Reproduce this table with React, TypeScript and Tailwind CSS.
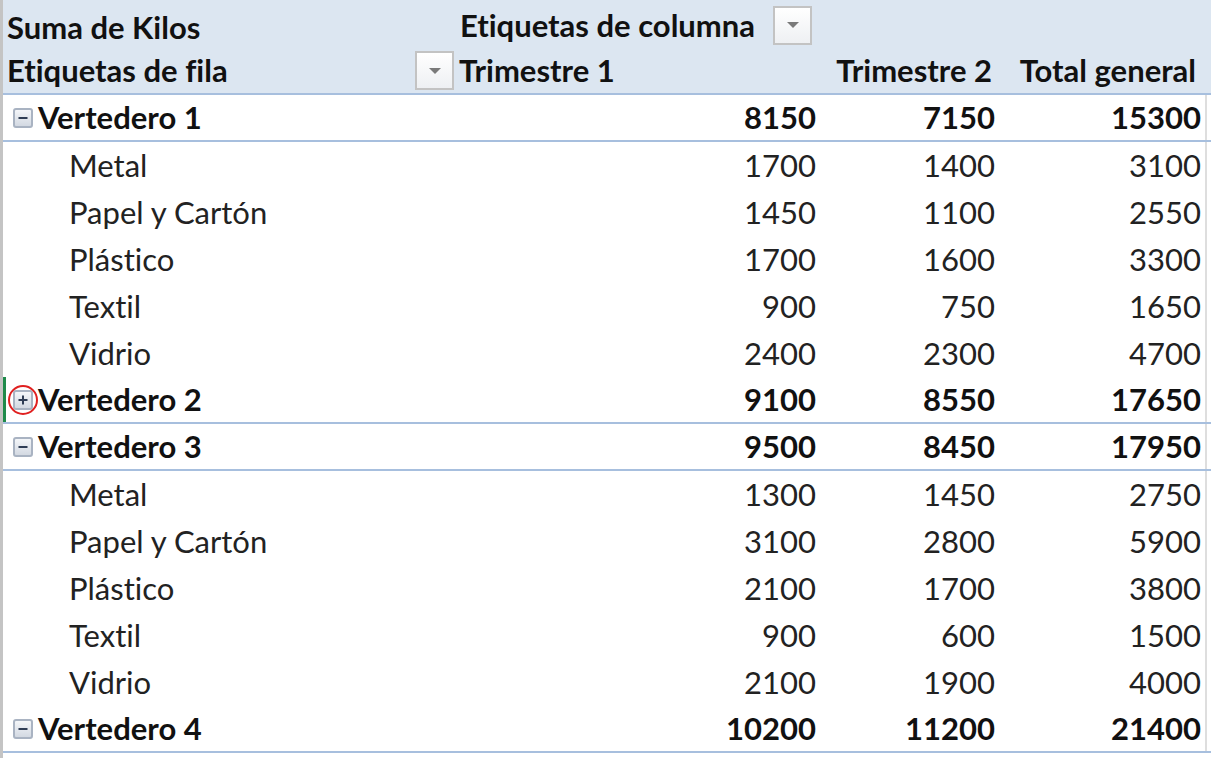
import type { ReactNode } from "react";

type Item = { name: string; t1: number; t2: number };
type Group = { name: string; t1: number; t2: number; open: boolean; items: Item[] };

const groups: Group[] = [
  {
    name: "Vertedero 1",
    t1: 8150,
    t2: 7150,
    open: true,
    items: [
      { name: "Metal", t1: 1700, t2: 1400 },
      { name: "Papel y Cartón", t1: 1450, t2: 1100 },
      { name: "Plástico", t1: 1700, t2: 1600 },
      { name: "Textil", t1: 900, t2: 750 },
      { name: "Vidrio", t1: 2400, t2: 2300 },
    ],
  },
  { name: "Vertedero 2", t1: 9100, t2: 8550, open: false, items: [] },
  {
    name: "Vertedero 3",
    t1: 9500,
    t2: 8450,
    open: true,
    items: [
      { name: "Metal", t1: 1300, t2: 1450 },
      { name: "Papel y Cartón", t1: 3100, t2: 2800 },
      { name: "Plástico", t1: 2100, t2: 1700 },
      { name: "Textil", t1: 900, t2: 600 },
      { name: "Vidrio", t1: 2100, t2: 1900 },
    ],
  },
  { name: "Vertedero 4", t1: 10200, t2: 11200, open: true, items: [] },
];

const grid = "grid grid-cols-[455px_362px_179px_206px_1fr]";

function FilterButton() {
  return (
    <div className="w-[39px] h-[39px] shrink-0 border-2 border-[#c3c3c3] bg-gradient-to-b from-white to-[#eef0f3] flex items-center justify-center">
      <svg width="14" height="8" viewBox="0 0 14 8">
        <path d="M1 1 L13 1 L7 7 Z" fill="#7a7a7a" />
      </svg>
    </div>
  );
}

function Toggle({ open, marked }: { open: boolean; marked?: boolean }) {
  return (
    <div className="relative w-[20px] h-[20px] mr-[5px] shrink-0">
      <div className="w-[20px] h-[20px] border-2 border-[#a9b3c2] rounded-[3px] bg-gradient-to-b from-[#f4f6f9] to-[#d3d9e2] flex items-center justify-center">
        <svg width="12" height="12" viewBox="0 0 12 12">
          <path d="M1.5 6 H10.5" stroke="#2f3d55" strokeWidth="2" />
          {!open && <path d="M6 1.5 V10.5" stroke="#2f3d55" strokeWidth="2" />}
        </svg>
      </div>
      {marked && (
        <div className="absolute -left-[5px] -top-[5px] w-[30px] h-[30px] rounded-full border-2 border-[#e02020]" />
      )}
    </div>
  );
}

function Num({ children, bold }: { children: ReactNode; bold?: boolean }) {
  return (
    <div className={`flex items-center justify-end pr-[4px] ${bold ? "font-bold" : ""}`}>
      {children}
    </div>
  );
}

export default function App() {
  return (
    <div className="w-[1211px] h-[758px] overflow-hidden bg-white text-[#111] text-[31px] leading-none font-['Lato','Open_Sans',sans-serif] [font-variant-ligatures:none] border-l-[3px] border-[#c4c4c4]">
      {/* header band */}
      <div className="bg-[#dce6f1] border-b-2 border-[#a7bfde]">
        <div className={`${grid} h-[48px] font-bold`}>
          <div className="flex items-center pl-[4px] pt-[6px]">Suma de Kilos</div>
          <div className="col-span-2 flex items-center gap-[18px] pl-[2px] pt-[2px]">
            <span>Etiquetas de columna</span>
            <FilterButton />
          </div>
          <div />
          <div />
        </div>
        <div className={`${grid} h-[45px] font-bold`}>
          <div className="flex items-center justify-between pl-[4px] pr-[4px]">
            <span>Etiquetas de fila</span>
            <FilterButton />
          </div>
          <div className="flex items-center pl-[1px]">Trimestre 1</div>
          <div className="flex items-center justify-end pr-[7px]">Trimestre 2</div>
          <div className="flex items-center justify-end pr-[9px]">Total general</div>
          <div />
        </div>
      </div>

      {groups.map((g) => (
        <div key={g.name}>
          <div
            className={`${grid} h-[47px] border-b-2 border-[#a7bfde] font-bold ${
              g.open ? "" : "shadow-[inset_3px_0_0_#1e8a4a]"
            }`}
          >
            <div className="flex items-center pl-[10px]">
              <Toggle open={g.open} marked={!g.open} />
              <span>{g.name}</span>
            </div>
            <Num bold>{g.t1}</Num>
            <Num bold>{g.t2}</Num>
            <Num bold>{g.t1 + g.t2}</Num>
            <div className="border-l-2 border-[#dedede]" />
          </div>
          {g.items.map((it) => (
            <div key={it.name} className={`${grid} h-[47px] text-[#222]`}>
              <div className="flex items-center pl-[66px]">{it.name}</div>
              <Num>{it.t1}</Num>
              <Num>{it.t2}</Num>
              <Num>{it.t1 + it.t2}</Num>
              <div className="border-l-2 border-[#dedede]" />
            </div>
          ))}
        </div>
      ))}
    </div>
  );
}
